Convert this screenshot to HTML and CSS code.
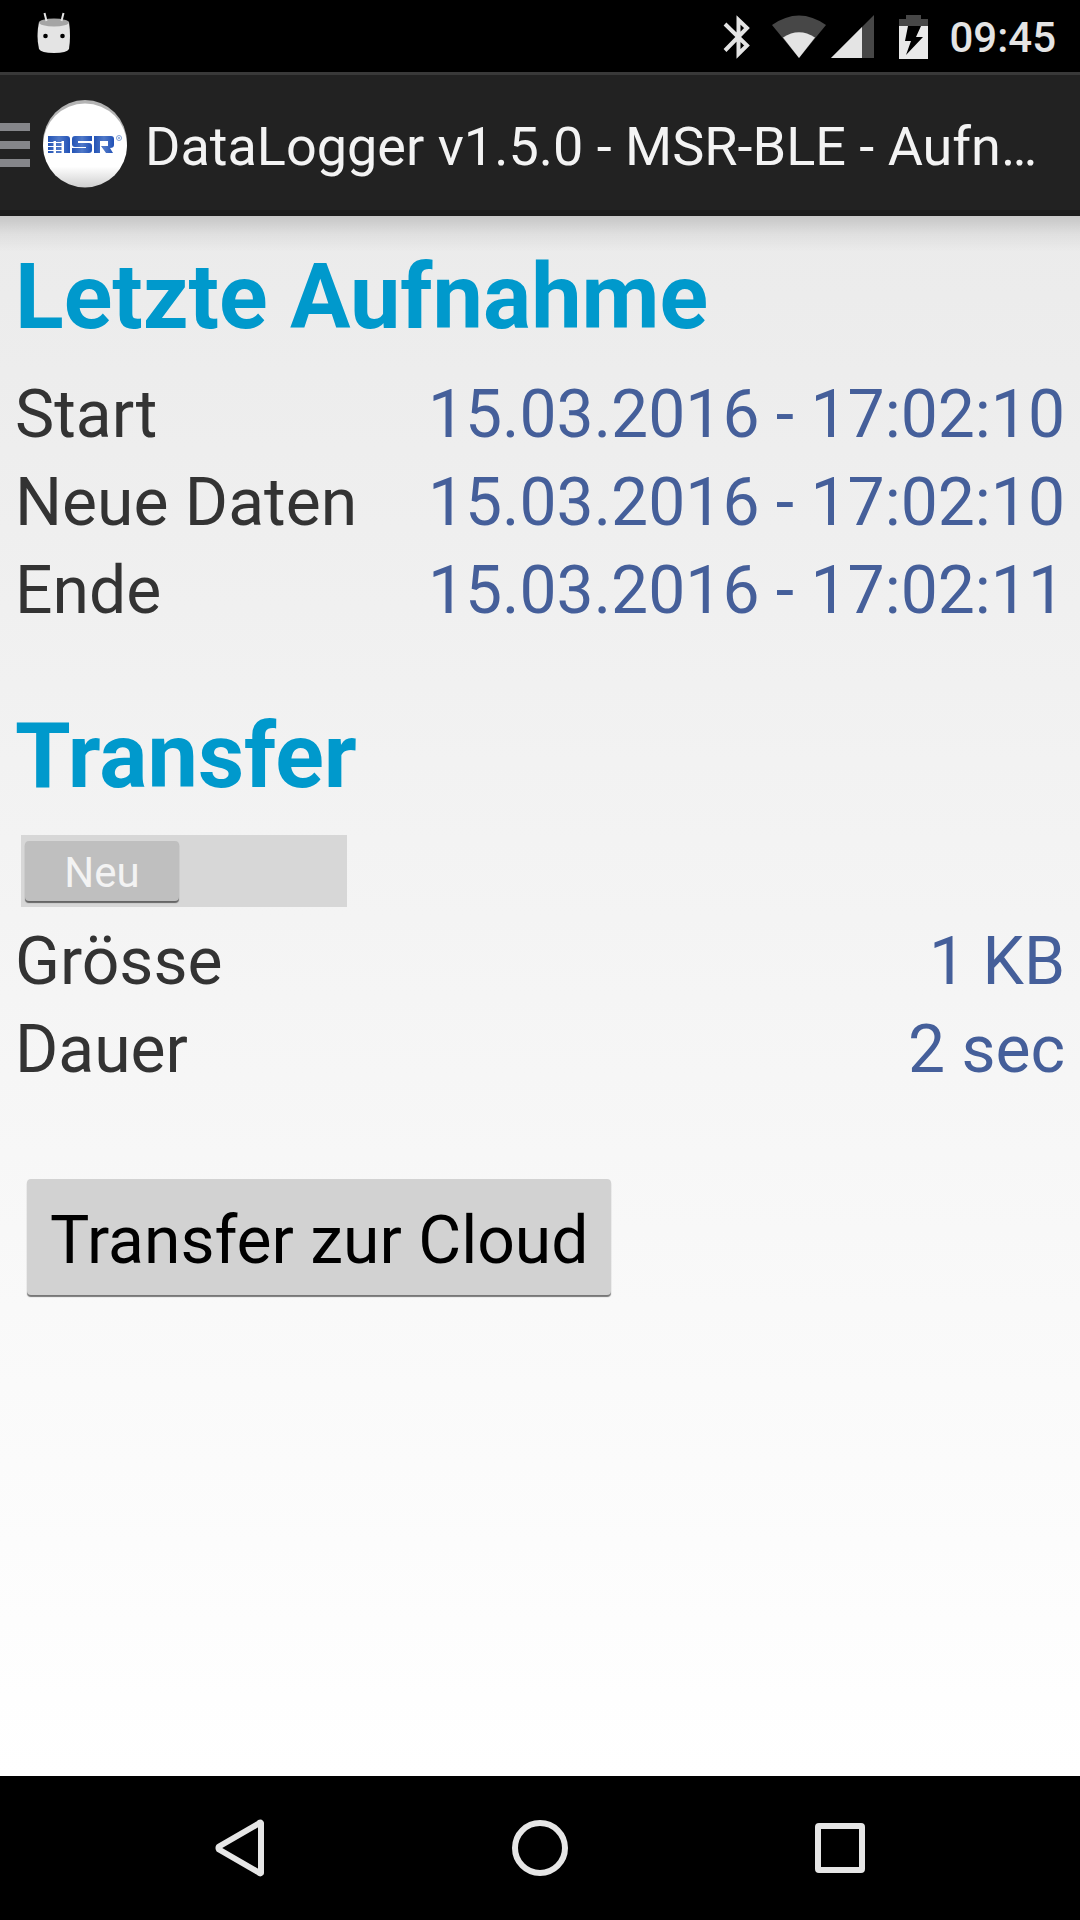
FILE: index.html
```html
<!DOCTYPE html>
<html lang="de">
<head>
<meta charset="utf-8">
<meta name="viewport" content="width=device-width, initial-scale=1">
<title>DataLogger</title>
<link rel="stylesheet" href="styles.css">
</head>
<body>
<div class="screen">
  <div class="status-bar">
    <svg class="debug-icon" width="36" height="42" viewBox="0 0 36 42" aria-hidden="true">
      <path d="M3 10Q18 4 33 10Q35 24 33 37Q31 41 18 41Q5 41 3 37Q0 24 3 10Z" fill="#e4e4e4"/>
      <ellipse cx="18" cy="10.500" rx="15" ry="4" fill="#a5a5a5"/>
      <path d="M8.500 1L10.500 9M27.500 1L25.500 9" stroke="#e4e4e4" stroke-width="2"/>
      <circle cx="9.500" cy="24" r="2.300"/><circle cx="26.500" cy="24" r="2.300"/>
    </svg>
    <div class="status-icons">
      <svg width="28" height="44" viewBox="0 0 28 44" aria-hidden="true">
        <path d="M2 9L24 30.500L15.500 39V5L24 13L2 35.500" fill="none" stroke="#e4e4e4" stroke-width="4"/>
      </svg>
      <svg class="wifi-icon" width="54" height="44" viewBox="0 0 54 44" aria-hidden="true">
        <path d="M0 10Q27-9 54 10L27 43Z" fill="#474747"/>
        <path d="M11 22.500Q27 12 43 22.500L27 43Z" fill="#e4e4e4"/>
      </svg>
      <svg class="signal-icon" width="43" height="44" viewBox="0 0 43 44" aria-hidden="true">
        <path d="M0 43L43 0V43Z" fill="#474747"/><path d="M0 43L31 12V43Z" fill="#e4e4e4"/>
      </svg>
      <svg class="battery-icon" width="29" height="44" viewBox="0 0 29 44" aria-hidden="true">
        <path d="M0 4H7V0H22V4H29V11H0Z" fill="#474747"/>
        <path d="M0 11H29V44H0Z" fill="#e9e9e9"/>
        <path d="M9 11H22L17 22H24L7 40L12 26H6Z"/>
      </svg>
    </div>
    <time class="clock">09:45</time>
  </div>

  <header class="app-bar">
    <button class="menu-button" type="button" aria-label="Menü"><span></span><span></span><span></span></button>
    <svg class="app-logo" width="84" height="90" viewBox="0 0 84 90" aria-hidden="true">
      <defs>
        <linearGradient id="disc" x1="0" y1="0" x2="0" y2="1">
          <stop offset="0" stop-color="#fff"/><stop offset=".75" stop-color="#fff"/><stop offset="1" stop-color="#cfcfcf"/>
        </linearGradient>
        <linearGradient id="blue" x1="0" y1="0" x2="1" y2="0">
          <stop offset="0" stop-color="#2353b5"/><stop offset=".5" stop-color="#5079c8"/><stop offset="1" stop-color="#2050b6"/>
        </linearGradient>
      </defs>
      <ellipse cx="42" cy="44" rx="42" ry="43" fill="#b4b4b4"/>
      <ellipse cx="42" cy="46.500" rx="42" ry="42" fill="url(#disc)"/>
      <g fill="url(#blue)">
        <path d="M5 37H24Q27 37 27 40V54H21V42H18.500V54H13V42H10.500V54H5Z"/>
        <path d="M32 37H49V42H35V44H46Q49 44 49 47V51Q49 54 46 54H29V49H43V48H32Q29 48 29 45V40Q29 37 32 37Z"/>
        <path d="M51 37H68Q71 37 71 40V46Q71 49 67 49L70 54H63L58 47H65V42H57V54H51Z"/>
      </g>
      <path d="M4 43.500H19M4 47.500H19M4 51.500H19" stroke="#fff" stroke-width="1.200"/>
      <circle cx="76" cy="39" r="2.500" fill="none" stroke="#7fa0d8"/><circle cx="76" cy="39" r="1" fill="#7fa0d8"/>
    </svg>
    <h1 class="app-title">DataLogger v1.5.0 - MSR-BLE - Aufn…</h1>
  </header>

  <main class="content">
    <h2 class="section-title">Letzte Aufnahme</h2>
    <dl class="rows">
      <div class="row"><dt>Start</dt><dd>15.03.2016 - 17:02:10</dd></div>
      <div class="row"><dt>Neue Daten</dt><dd>15.03.2016 - 17:02:10</dd></div>
      <div class="row"><dt>Ende</dt><dd>15.03.2016 - 17:02:11</dd></div>
    </dl>
    <h2 class="section-title section-title-next">Transfer</h2>
    <button class="switch" type="button" role="switch" aria-checked="false"><span class="switch-thumb">Neu</span></button>
    <dl class="rows rows-transfer">
      <div class="row"><dt>Grösse</dt><dd>1 KB</dd></div>
      <div class="row"><dt>Dauer</dt><dd>2 sec</dd></div>
    </dl>
    <button class="cloud-button" type="button">Transfer zur Cloud</button>
  </main>

  <nav class="nav-bar">
    <button class="nav-button" type="button" aria-label="Zurück">
      <svg width="60" height="60" viewBox="0 0 60 60"><path d="M51 5V55Q50 56 48 54L9 31.500Q8 30 9 28.500L48 6Q50 4 51 5Z" fill="none" stroke="#e6e6e6" stroke-width="6" stroke-linejoin="round"/></svg>
    </button>
    <button class="nav-button" type="button" aria-label="Startseite">
      <svg width="60" height="60" viewBox="0 0 60 60"><circle cx="30" cy="30" r="25" fill="none" stroke="#e6e6e6" stroke-width="6"/></svg>
    </button>
    <button class="nav-button" type="button" aria-label="Übersicht">
      <svg width="60" height="60" viewBox="0 0 60 60"><rect x="8" y="8" width="44" height="44" rx="1" fill="none" stroke="#e6e6e6" stroke-width="6"/></svg>
    </button>
  </nav>
</div>
</body>
</html>
```
FILE: styles.css
```css
* { box-sizing: border-box; }

body, h1, h2, dl, dd { margin: 0; }

body {
  font-family: Roboto, "Liberation Sans", sans-serif;
  background: #000;
}

button {
  margin: 0;
  padding: 0;
  border: 0;
  background: none;
  font-family: inherit;
}

svg { display: block; flex: none; }

.screen {
  display: flex;
  flex-direction: column;
  min-height: 100vh;
}

/* System status bar */
.status-bar {
  display: flex;
  align-items: center;
  height: 72px;
  padding: 2px 24px 0 36px;
  background: #000;
  color: #e4e4e4;
}

.debug-icon { margin-bottom: 8px; }

.status-icons {
  display: flex;
  margin-left: auto;
}

.wifi-icon { margin-left: 21px; }
.signal-icon { margin-left: 5px; }
.battery-icon { margin-left: 25px; }

.clock {
  margin-left: 21px;
  padding-top: 2px;
  font-size: 42px;
  font-weight: 500;
  line-height: 48px;
}

/* App bar */
.app-bar {
  display: flex;
  align-items: center;
  height: 144px;
  padding: 4px 16px 0 0;
  border-top: 3px solid #393939;
  border-bottom: 6px solid #1a1a1a;
  background: #222;
}

.menu-button {
  display: flex;
  flex: none;
  flex-direction: column;
  gap: 10px;
  width: 30px;
  margin-right: 13px;
}

.menu-button span {
  height: 8px;
  background: #85868a;
}

.app-logo {
  margin: 0 18px 2px 0;
}

.app-title {
  min-width: 0;
  padding-top: 4px;
  overflow: hidden;
  color: #f3f3f3;
  font-size: 54px;
  font-weight: 400;
  line-height: 72px;
  text-overflow: ellipsis;
  white-space: nowrap;
}

/* Recording details */
.content {
  flex: 1;
  padding: 22px 15px 40px;
  background:
    linear-gradient(rgba(0, 0, 0, .16), rgba(0, 0, 0, .05) 50%, transparent) top / 100% 36px no-repeat,
    linear-gradient(#ebebeb, #fff);
}

.section-title {
  color: #0099cc;
  font-size: 90px;
  font-weight: 700;
  line-height: 120px;
}

.section-title-next { margin-top: 62px; }

.rows {
  margin-top: 13px;
  font-size: 66px;
  line-height: 88px;
}

.rows-transfer { margin-top: 11px; }

.row {
  display: flex;
  justify-content: space-between;
  color: #333;
}

.row dd { color: #455f9a; }

.switch {
  display: block;
  width: 326px;
  height: 72px;
  margin: 18px 0 0 6px;
  padding: 6px 4px;
  background: #d7d7d7;
}

.switch-thumb {
  display: block;
  width: 154px;
  padding-top: 3px;
  border-radius: 4px;
  background: #bfbfbf;
  box-shadow: 0 2px 1px #666;
  color: #f3f3f3;
  font-size: 42px;
  line-height: 57px;
}

.cloud-button {
  display: block;
  margin: 85px 0 0 12px;
  padding: 18px 23px 10px;
  border-radius: 4px;
  background: #d2d2d2;
  box-shadow: 0 2px 1px #777;
  color: #000;
  font-size: 66px;
  line-height: 88px;
}

/* System navigation */
.nav-bar {
  display: flex;
  justify-content: center;
  gap: 20px;
  height: 144px;
  background: #000;
}

.nav-button {
  display: flex;
  flex: 0 1 280px;
  align-items: center;
  justify-content: center;
}
```
